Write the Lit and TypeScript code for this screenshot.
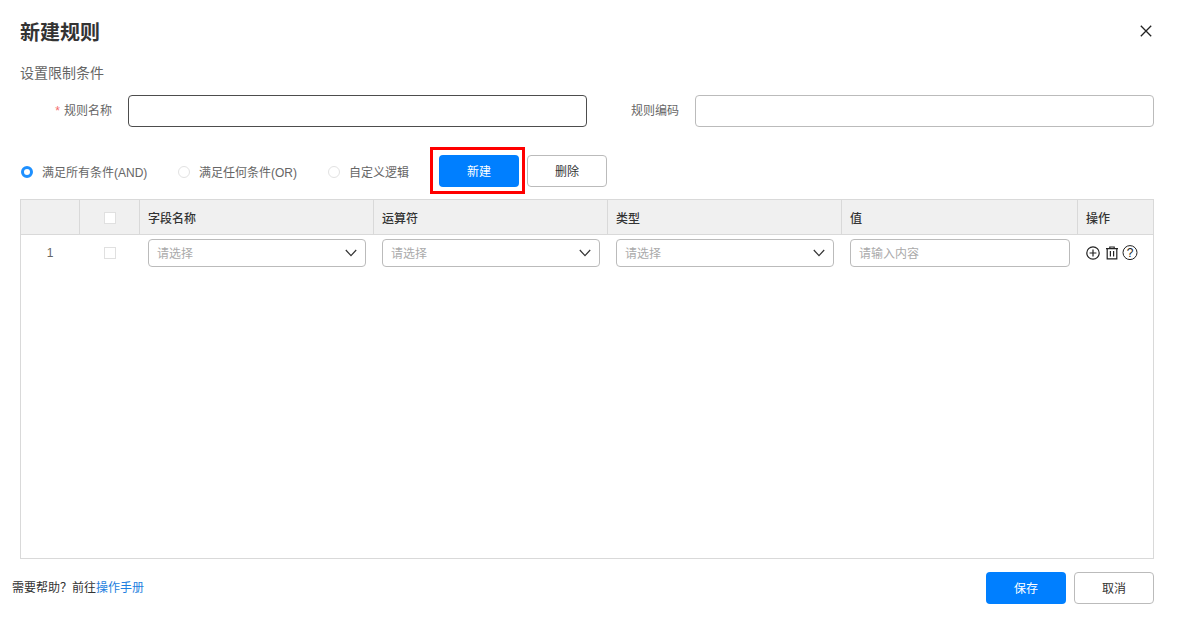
import { LitElement, html, css } from "lit";
import { customElement } from "lit/decorators.js";

const chevron = html`<svg class="chev" viewBox="0 0 12 8" width="12" height="8"><path d="M.8 1 6 6.6 11.2 1" fill="none" stroke="#333" stroke-width="1.2"/></svg>`;

const cols = ["字段名称", "运算符", "类型", "值"];

@customElement("app-root")
export class AppRoot extends LitElement {
  static styles = css`
    :host {
      display: block;
      width: 1177px;
      height: 621px;
      background: #fff;
      overflow: hidden;
      font-family: "Liberation Sans", "Noto Sans CJK SC", sans-serif;
      font-size: 12px;
      color: #666;
    }
    * { box-sizing: border-box; }
    .main { padding: 16px 23px 0 20px; }
    .title-row { display: flex; justify-content: space-between; align-items: center; height: 32px; }
    h1 { margin: 0; padding-top: 2px; font-size: 20px; line-height: 32px; font-weight: 700; color: #333; }
    .close { display: block; margin-right: 2px; margin-top: -2px; }
    .section { margin-top: 14px; height: 20px; padding-top: 1px; font-size: 14px; line-height: 20px; color: #666; font-weight: 400; }
    .form { margin-top: 13px; display: flex; height: 32px; align-items: center; }
    .label { color: #666; text-align: right; line-height: 20px; }
    .label.a { width: 92px; margin-right: 16px; }
    .label.b { width: 92px; margin-right: 16px; }
    .req { color: #f56c6c; margin-right: 4px; }
    .input { height: 32px; border: 1px solid #bbb; border-radius: 4px; background: #fff; }
    .input.focus { border-color: #4d4d4d; width: 459px; }
    .input.plain { width: 459px; }
    .toolbar { margin-top: 28px; height: 32px; display: flex; align-items: center; }
    .radio { display: flex; align-items: center; line-height: 20px; padding-top: 4px; }
    .dot { width: 12px; height: 12px; border-radius: 50%; border: 1px solid #e2e2e2; margin: -2px 9px 0 1px; background: #fff; }
    .dot.on { border: 3px solid #1e90ff; }
    .r1 { width: 157px; }
    .r2 { width: 150px; }
    .r3 { width: 112px; }
    .btn { width: 80px; height: 32px; padding-bottom: 2px; border-radius: 4px; display: flex; align-items: center; justify-content: center; font-size: 12px; }
    .btn.primary { background: #007fff; color: #fff; }
    .btn.ghost { background: #fff; border: 1px solid #bbb; color: #333; }
    .hl { position: relative; margin-right: 8px; }
    .hl::after { content: ""; position: absolute; left: -9px; top: -8px; width: 95px; height: 47px; border: 3px solid #f00; box-sizing: border-box; }
    .table { margin-top: 12px; width: 1134px; height: 360px; border: 1px solid #d9d9d9; }
    .grid { display: grid; grid-template-columns: 59px 60px 234px 234px 234px 236px 75px; }
    .head { height: 35px; background: #f0f0f0; border-bottom: 1px solid #d9d9d9; color: #333; font-weight: 500; }
    .head > div { display: flex; align-items: center; padding-left: 8px; border-right: 1px solid #d9d9d9; }
    .head > div:last-child { border-right: 0; }
    .head > .center { justify-content: center; padding-left: 0; padding-top: 2px; }
    .box { width: 12px; height: 12px; border: 1px solid #e0e0e0; background: #fff; }
    .row { height: 36px; align-items: center; }
    .row > div { display: flex; align-items: center; padding-left: 8px; }
    .row > .center { justify-content: center; padding-left: 0; color: #666; }
    .row > .num { margin-top: -1px; padding-right: 1px; }
    .ctl { height: 28px; width: 218px; border: 1px solid #bbb; border-radius: 4px; display: flex; align-items: center; justify-content: space-between; padding: 0 8px 1px; color: #aaa; }
    .ctl.wide { width: 220px; }
    .chev { display: block; margin-right: 0; }
    .row > .ops { gap: 2px; margin-top: -1px; }
    .ops svg { display: block; }
    .footer { padding: 13px 23px 0 12px; display: flex; justify-content: space-between; align-items: center; }
    .help { color: #333; margin-top: -1px; line-height: 20px; }
    .help a { color: #1e7fe0; text-decoration: none; }
    .actions { display: flex; gap: 8px; }
  `;

  render() {
    return html`
      <div class="main">
        <div class="title-row">
          <h1>新建规则</h1>
          <svg class="close" viewBox="0 0 12 12" width="12" height="12"><path d="M.8.8l10.4 10.4M11.2.8.8 11.2" stroke="#222" stroke-width="1.3" fill="none"/></svg>
        </div>
        <div class="section">设置限制条件</div>
        <div class="form">
          <div class="label a"><span class="req">*</span>规则名称</div>
          <div class="input focus"></div>
          <div class="label b">规则编码</div>
          <div class="input plain"></div>
        </div>
        <div class="toolbar">
          <div class="radio r1"><span class="dot on"></span>满足所有条件(AND)</div>
          <div class="radio r2"><span class="dot"></span>满足任何条件(OR)</div>
          <div class="radio r3"><span class="dot"></span>自定义逻辑</div>
          <div class="btn primary hl">新建</div>
          <div class="btn ghost">删除</div>
        </div>
        <div class="table">
          <div class="grid head">
            <div></div>
            <div class="center"><span class="box"></span></div>
            ${cols.map((c) => html`<div>${c}</div>`)}
            <div>操作</div>
          </div>
          <div class="grid row">
            <div class="center num">1</div>
            <div class="center"><span class="box"></span></div>
            ${cols.slice(0, 3).map(() => html`<div><div class="ctl">请选择${chevron}</div></div>`)}
            <div><div class="ctl wide">请输入内容</div></div>
            <div class="ops">
              <svg viewBox="0 0 16 16" width="16" height="16"><circle cx="7" cy="8" r="6.2" fill="none" stroke="#222" stroke-width="1.2"/><path d="M7 4.6v6.8M3.6 8h6.8" stroke="#222" stroke-width="1.2"/></svg>
              <svg viewBox="0 0 16 16" width="16" height="16"><path d="M2 3.6h12M5.8 3.4V2h4.4v1.4M3.2 3.6v10.2h9.6V3.6M6.4 6v5.6M9.6 6v5.6" fill="none" stroke="#222" stroke-width="1.2"/></svg>
              <svg viewBox="0 0 16 16" width="16" height="16"><circle cx="8" cy="7.6" r="7" fill="none" stroke="#222" stroke-width="1"/><text x="8" y="11.8" text-anchor="middle" font-size="12" fill="#222" font-family="Liberation Sans">?</text></svg>
            </div>
          </div>
        </div>
      </div>
      <div class="footer">
        <div class="help">需要帮助？前往<a>操作手册</a></div>
        <div class="actions">
          <div class="btn primary">保存</div>
          <div class="btn ghost">取消</div>
        </div>
      </div>
    `;
  }
}
